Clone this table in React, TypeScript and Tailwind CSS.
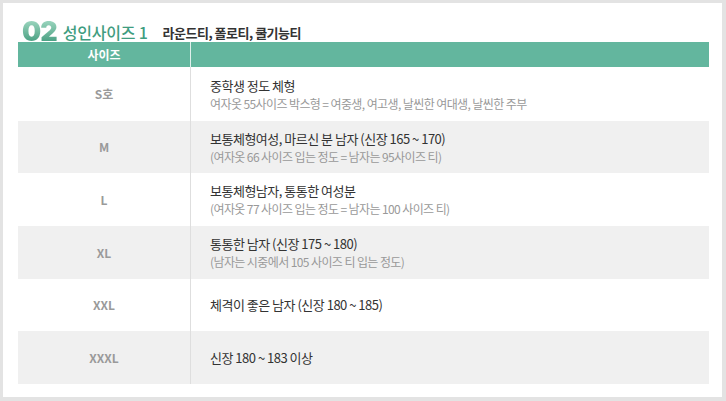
import React from 'react'

const ROWS = [
  { size: 'S호', title: '중학생 정도 체형', sub: '여자옷 55사이즈 박스형 = 여중생, 여고생, 날씬한 여대생, 날씬한 주부', h: 'h-[54px]' },
  { size: 'M', title: '보통체형여성, 마르신 분 남자 (신장 165 ~ 170)', sub: '(여자옷 66 사이즈 입는 정도 = 남자는 95사이즈 티)', h: 'h-[52px]' },
  { size: 'L', title: '보통체형남자, 통통한 여성분', sub: '(여자옷 77 사이즈 입는 정도 = 남자는 100 사이즈 티)', h: 'h-[53px]' },
  { size: 'XL', title: '통통한 남자 (신장 175 ~ 180)', sub: '(남자는 시중에서 105 사이즈 티 입는 정도)', h: 'h-[53px]' },
  { size: 'XXL', title: '체격이 좋은 남자 (신장 180 ~ 185)', sub: '', h: 'h-[52px]' },
  { size: 'XXXL', title: '신장 180 ~ 183 이상', sub: '', h: 'h-[53px]' },
]

const App = () => {
  return (
    <div className="w-[726px] h-[401px] bg-white border-t-[3px] border-l-[3px] border-r-[4px] border-b-[4px] border-[#e3e3e3] font-['Noto_Sans_CJK_KR',sans-serif]">
      <div className="pl-[15px] pr-[13px]">
        {/* title */}
        <div className="flex items-end h-[39px] pl-[4px]">
          <span className="text-[27px] leading-[27px] font-black tracking-[-1px] bg-gradient-to-b from-[#a4dcc6] to-[#3a987a] bg-clip-text text-transparent font-['Inter',sans-serif] translate-y-[3px]">
            02
          </span>
          <span className="ml-[6px] text-[16px] leading-[20px] font-medium text-[#3f9d80] tracking-[-0.2px]">성인사이즈 1</span>
          <span className="ml-[15px] text-[13px] leading-[18px] font-bold text-[#333] tracking-[-0.5px]">라운드티, 폴로티, 쿨기능티</span>
        </div>

        {/* table */}
        <div className="w-[691px]">
          <div className="flex h-[25px] bg-[#63b69e] text-white">
            <div className="w-[172px] flex items-center justify-center text-[12px] font-bold">사이즈</div>
            <div className="w-px bg-white/80" />
            <div className="flex-1" />
          </div>
          {ROWS.map((row, i) => (
            <div key={row.size} className={`flex ${row.h} ${i % 2 === 1 ? 'bg-[#f0f0f0]' : 'bg-white'}`}>
              <div className="w-[172px] flex items-center justify-center text-[12px] font-bold text-[#9a9a9a]">
                {row.size}
              </div>
              <div className="w-px bg-[#dedede]" />
              <div className="flex-1 flex flex-col justify-center pl-[19px]">
                <div className="text-[13px] leading-[18px] text-[#333] tracking-[-0.5px]">{row.title}</div>
                {row.sub && (
                  <div className="text-[12px] leading-[17px] text-[#999] tracking-[-0.6px]">{row.sub}</div>
                )}
              </div>
            </div>
          ))}
        </div>
      </div>
    </div>
  )
}

export default App
